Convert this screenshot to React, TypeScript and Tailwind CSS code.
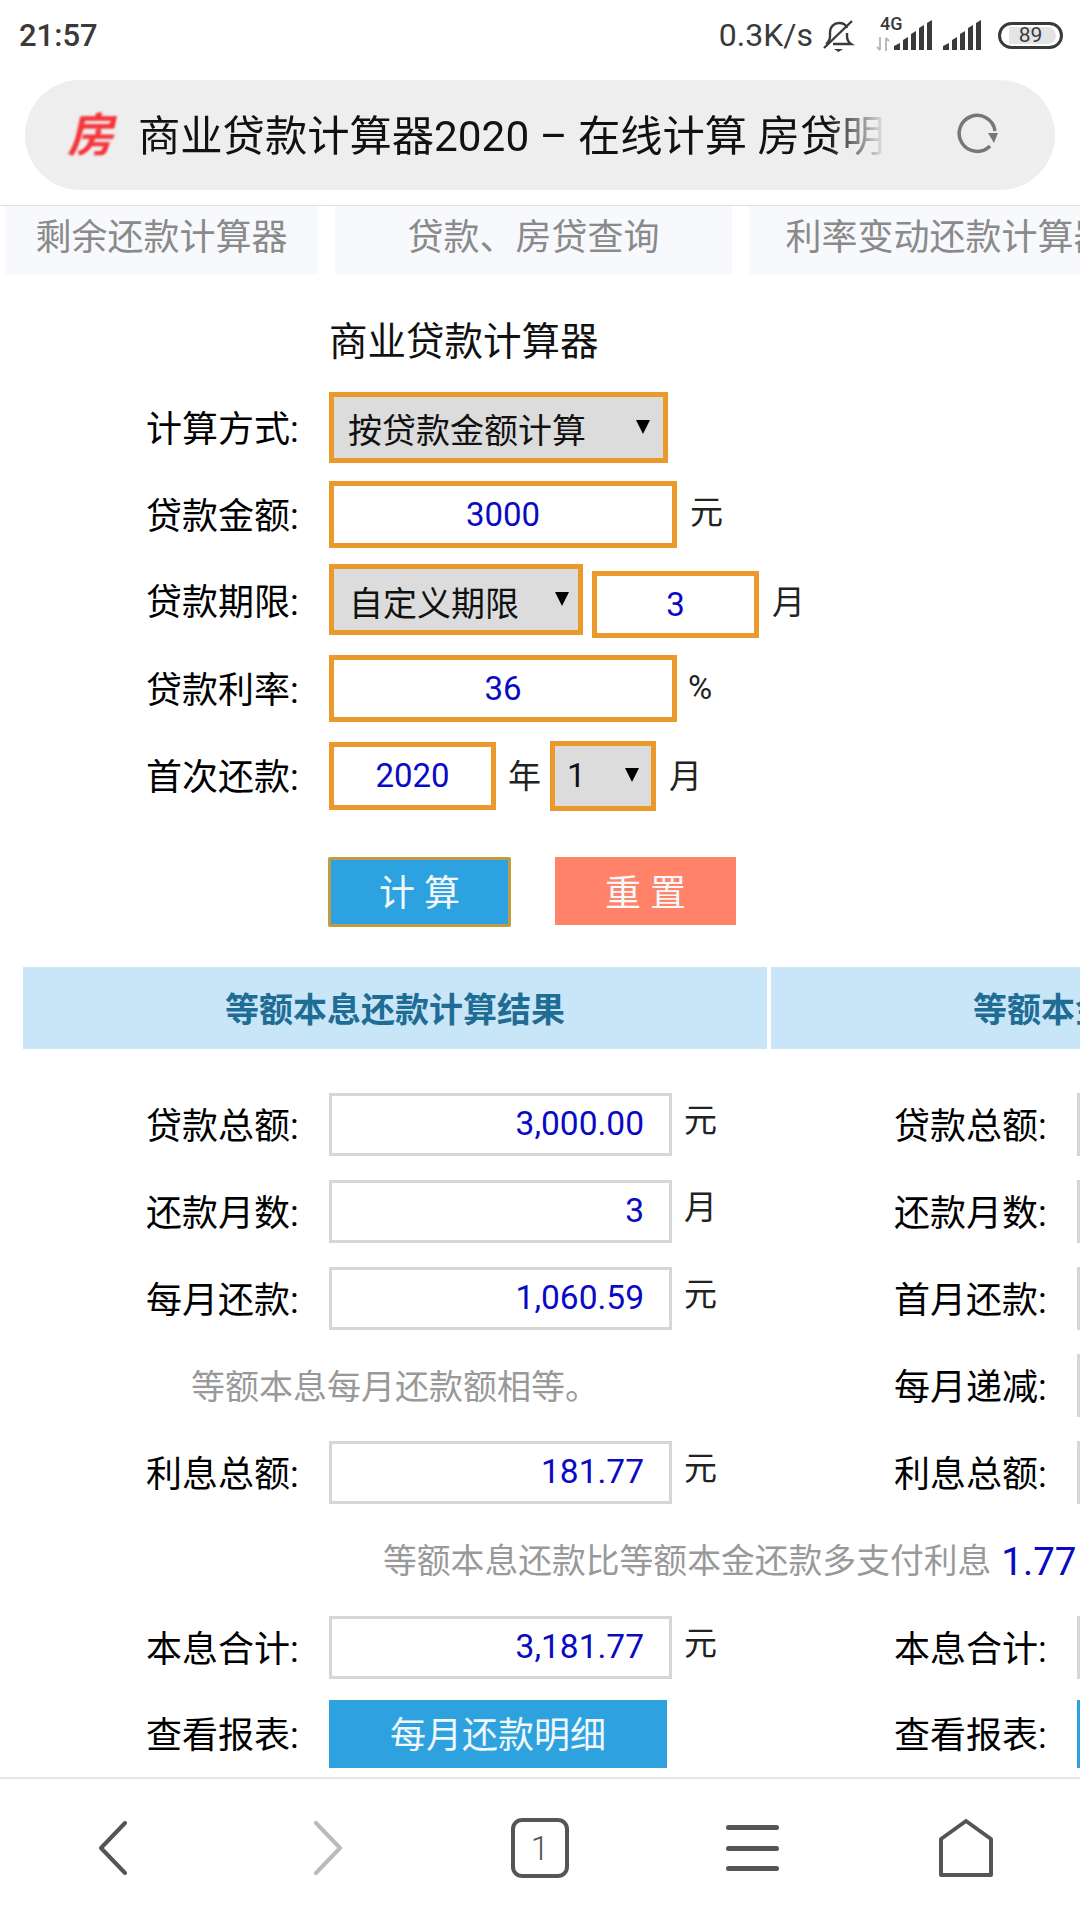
import type { ReactNode } from "react";

const FONT = "font-['Roboto','Noto_Sans_CJK_SC',sans-serif]";

function Arrow({ className }: { className: string }) {
  return (
    <svg width="14" height="14" viewBox="0 0 14 14" className={className}>
      <polygon points="0,0 14,0 7,14" fill="#000" />
    </svg>
  );
}

function Label({ children }: { children: ReactNode }) {
  return (
    <div className="mt-[4px] w-[183px] shrink-0 text-[36px] leading-none text-black">
      {children}
    </div>
  );
}

function Unit({ children, className }: { children: ReactNode; className: string }) {
  return (
    <div className={`shrink-0 text-[33px] leading-none text-[#222] ${className}`}>
      {children}
    </div>
  );
}

function FormInput({ value, className }: { value: string; className: string }) {
  return (
    <div
      className={`flex shrink-0 items-center justify-center border-[5px] border-[#e99a2b] bg-white text-[33px] text-[#0a0ac4] ${className}`}
    >
      {value}
    </div>
  );
}

function ResultInput({ value }: { value?: string }) {
  return (
    <div className="flex h-[63px] w-[343px] shrink-0 items-center justify-end border-[3px] border-[#d6d6d6] bg-white pr-[25px] text-[33.500px] text-[#0a0ac4]">
      {value}
    </div>
  );
}

function ResultRow({ label, value, unit }: { label: string; value?: string; unit?: string }) {
  return (
    <div className="flex w-[748px] shrink-0 items-start pl-[123px]">
      <div className="flex h-[63px] items-center">
        <Label>{label}</Label>
      </div>
      <ResultInput value={value} />
      {unit && <div className="mt-[11px] ml-[12px] text-[33px] leading-none text-[#222]">{unit}</div>}
    </div>
  );
}

function Cell({ children }: { children: ReactNode }) {
  return <div className="flex w-[748px] shrink-0 items-start">{children}</div>;
}

function StatusBar() {
  return (
    <div className="flex h-[60px] items-center pt-[10px] pr-[17px] pl-[19px] text-[#3a3a3a]">
      <div className="text-[31px] leading-none font-medium">21:57</div>
      <div className="ml-auto text-[32px] leading-none">0.3K/s</div>
      <svg width="34" height="34" viewBox="0 0 34 34" className="ml-[8px]" fill="none" stroke="#3a3a3a" strokeWidth="2.4">
        <path d="M5 26 c3-2 4-4 4-8 v-4 c0-5 4-9 9-9 c4 0 7 2 8 5" />
        <path d="M26 15 v3 c0 4 1 6 4 8 H12" />
        <path d="M3 30 L31 3" />
        <path d="M13 31 h9 l-4.500 3z" fill="#3a3a3a" stroke="none" />
      </svg>
      <div className="relative ml-[21px] h-[34px] w-[56px] shrink-0">
        <div className="absolute top-[-3px] left-[4px] text-[18px] leading-none font-medium">4G</div>
        <svg width="14" height="16" viewBox="0 0 14 16" className="absolute top-[18px] left-0" fill="none" stroke="#b5b5b5" strokeWidth="1.800">
          <path d="M4 1 v13 M1 11 l3 3" />
          <path d="M10 15 V2 M13 5 l-3-3" />
        </svg>
        <svg width="40" height="30" viewBox="0 0 40 30" className="absolute top-[2px] left-[18px]" fill="#3a3a3a">
          <path d="M0 30 v-4 l6-3 v7z M9 30 V20 l5-3 V30z M17 30 V14 l5-3 V30z M25 30 V8 l5-3 V30z M33 30 V3 l5-3 V30z" />
        </svg>
      </div>
      <svg width="40" height="30" viewBox="0 0 40 30" className="ml-[11px]" fill="#3a3a3a">
        <path d="M0 30 v-4 l6-3 v7z M9 30 V20 l5-3 V30z M17 30 V14 l5-3 V30z M25 30 V8 l5-3 V30z M33 30 V3 l5-3 V30z" />
      </svg>
      <div className="relative ml-[15px] flex h-[27px] w-[65px] shrink-0 items-center justify-center rounded-full border-[3px] border-[#3a3a3a]">
        <div className="absolute top-[2px] bottom-[2px] left-[8px] w-[47px] rounded-r-full bg-[#e4e4e4]" />
        <span className="relative text-[21px] leading-none">89</span>
      </div>
    </div>
  );
}

function UrlBar() {
  return (
    <div className="mx-[25px] mt-[20px] flex h-[110px] items-center rounded-[55px] bg-[#eeeeee]">
      <div className="ml-[46px] w-[67px] shrink-0 -skew-x-12 text-[46px] leading-none font-bold text-[#f5333a] blur-[1px]">
        房
      </div>
      <div className="w-[749px] shrink-0 overflow-hidden pt-[4px] text-[42.300px] leading-none whitespace-nowrap text-[#111] [mask-image:linear-gradient(to_right,#000_92%,transparent_100%)]">
        商业贷款计算器2020 – 在线计算 房贷明细
      </div>
      <svg width="42" height="42" viewBox="0 0 42 42" className="mt-[-4px] ml-[70px] shrink-0" fill="none">
        <path d="M38 19 A18 18 0 1 0 33 34" stroke="#777" strokeWidth="3.500" />
        <polygon points="31,21 41,21 37,31" fill="#777" />
      </svg>
    </div>
  );
}

function Tabs() {
  return (
    <div className="mt-[15px] flex h-[69px] gap-[17px] overflow-hidden border-t border-[#dfe1e6] pl-[5px] text-[36px] text-[#8a8a8a]">
      <div className="flex w-[313px] shrink-0 items-center justify-center bg-[#f7f9fd] pb-[5px]">剩余还款计算器</div>
      <div className="flex w-[397px] shrink-0 items-center justify-center bg-[#f7f9fd] pb-[5px]">贷款、房贷查询</div>
      <div className="flex w-[397px] shrink-0 items-center justify-center bg-[#f7f9fd] pb-[5px]">利率变动还款计算器</div>
    </div>
  );
}

function CalcForm() {
  return (
    <div className="pl-[146px]">
      <div className="mt-[46px] ml-[183px] text-[38.500px] leading-[44px] text-[#111]">商业贷款计算器</div>

      <div className="mt-[28px] flex h-[71px] items-center">
        <Label>计算方式:</Label>
        <div className="flex h-[71px] w-[339px] shrink-0 items-center border-[5px] border-[#e99a2b] bg-[#dcdcdc] pt-[7px] pl-[14px] text-[34px] text-[#111]">
          按贷款金额计算
          <Arrow className="mb-[9px] ml-[50px]" />
        </div>
      </div>

      <div className="mt-[18px] flex h-[67px] items-center">
        <Label>贷款金额:</Label>
        <FormInput value="3000" className="h-[67px] w-[348px]" />
        <Unit className="mb-[5px] ml-[13px]">元</Unit>
      </div>

      <div className="mt-[16px] flex h-[74px] items-start">
        <div className="flex h-[74px] items-center">
          <Label>贷款期限:</Label>
        </div>
        <div className="flex h-[71px] w-[254px] shrink-0 items-center border-[5px] border-[#e99a2b] bg-[#dcdcdc] pt-[10px] pl-[15px] text-[34px] text-[#111]">
          自定义期限
          <Arrow className="mb-[12px] ml-[36px]" />
        </div>
        <FormInput value="3" className="mt-[7px] ml-[9px] h-[67px] w-[167px]" />
        <Unit className="mt-[22px] ml-[13px]">月</Unit>
      </div>

      <div className="mt-[17px] flex h-[67px] items-center">
        <Label>贷款利率:</Label>
        <FormInput value="36" className="h-[67px] w-[348px]" />
        <Unit className="mb-[3px] ml-[11px]">%</Unit>
      </div>

      <div className="mt-[19px] flex h-[70px] items-center">
        <Label>首次还款:</Label>
        <FormInput value="2020" className="h-[68px] w-[167px]" />
        <Unit className="ml-[12px]">年</Unit>
        <div className="ml-[9px] flex h-[70px] w-[106px] shrink-0 items-center border-[5px] border-[#e99a2b] bg-[#dcdcdc] pl-[12px] text-[33px] text-[#111]">
          1
          <Arrow className="mb-[2px] ml-[39px]" />
        </div>
        <Unit className="ml-[13px]">月</Unit>
      </div>

      <div className="mt-[46px] ml-[182px] flex items-start gap-[44px] text-[36px] leading-none whitespace-pre text-[#f4f8fb]">
        <div className="flex h-[70px] w-[183px] items-center justify-center rounded-[2px] border-[3px] border-[#c09a45] bg-[#2ca3e0] pt-[4px]">计 算</div>
        <div className="flex h-[68px] w-[181px] items-center justify-center bg-[#ff8269] pt-[6px]">重 置</div>
      </div>
    </div>
  );
}

function Results() {
  return (
    <div className="mt-[40px]">
      <div className="ml-[23px] flex gap-[4px]">
        <div className="flex h-[82px] w-[744px] shrink-0 items-center justify-center bg-[#c9e6f8] pt-[4px] text-[34px] font-bold text-[#1f6d94]">等额本息还款计算结果</div>
        <div className="flex h-[82px] w-[744px] shrink-0 items-center justify-center bg-[#c9e6f8] pt-[4px] text-[34px] font-bold text-[#1f6d94]">等额本金还款计算结果</div>
      </div>

      <div className="mt-[44px] ml-[23px] flex h-[87px]">
        <ResultRow label="贷款总额:" value="3,000.00" unit="元" />
        <ResultRow label="贷款总额:" />
      </div>
      <div className="ml-[23px] flex h-[87px]">
        <ResultRow label="还款月数:" value="3" unit="月" />
        <ResultRow label="还款月数:" />
      </div>
      <div className="ml-[23px] flex h-[87px]">
        <ResultRow label="每月还款:" value="1,060.59" unit="元" />
        <ResultRow label="首月还款:" />
      </div>
      <div className="ml-[23px] flex h-[87px]">
        <Cell>
          <div className="flex h-[63px] items-center pt-[3px] pl-[168px] text-[34px] text-[#999]">等额本息每月还款额相等。</div>
        </Cell>
        <ResultRow label="每月递减:" />
      </div>
      <div className="ml-[23px] flex h-[87px]">
        <ResultRow label="利息总额:" value="181.77" unit="元" />
        <ResultRow label="利息总额:" />
      </div>
      <div className="flex h-[88px] items-start pl-[383px] text-[33.800px] whitespace-nowrap text-[#999]">
        <div className="flex h-[68px] items-center">
          等额本息还款比等额本金还款多支付利息
          <span className="ml-[10px] text-[38.500px] text-[#0a0ac4]">1.77</span>
        </div>
      </div>
      <div className="ml-[23px] flex h-[84px]">
        <ResultRow label="本息合计:" value="3,181.77" unit="元" />
        <ResultRow label="本息合计:" />
      </div>
      <div className="ml-[23px] flex h-[68px]">
        <div className="flex w-[748px] shrink-0 items-center pl-[123px]">
          <Label>查看报表:</Label>
          <div className="flex h-[68px] w-[338px] items-center justify-center bg-[#2ea2df] pt-[3px] text-[36px] text-[#f0f8fc]">每月还款明细</div>
        </div>
        <div className="flex w-[748px] shrink-0 items-center pl-[123px]">
          <Label>查看报表:</Label>
          <div className="h-[68px] w-[338px] bg-[#2ea2df]" />
        </div>
      </div>
    </div>
  );
}

function BottomNav() {
  return (
    <div className="flex h-[143px] shrink-0 items-center border-t-2 border-[#e6e6e6] bg-white pb-[3px] pl-[98px]">
      <svg width="30" height="54" viewBox="0 0 30 54" fill="none" stroke="#555" strokeWidth="4" strokeLinecap="round" strokeLinejoin="round">
        <path d="M27 2 L3 27 L27 52" />
      </svg>
      <svg width="30" height="54" viewBox="0 0 30 54" className="ml-[185px]" fill="none" stroke="#bbb" strokeWidth="4" strokeLinecap="round" strokeLinejoin="round">
        <path d="M3 2 L27 27 L3 52" />
      </svg>
      <div className="ml-[168px] flex h-[60px] w-[58px] items-center justify-center rounded-[11px] border-4 border-[#555] text-[33px] leading-none font-light text-[#555]">
        1
      </div>
      <div className="ml-[157px] flex h-[46px] w-[53px] flex-col justify-between">
        <div className="h-[5px] rounded-full bg-[#555]" />
        <div className="h-[5px] rounded-full bg-[#555]" />
        <div className="h-[5px] rounded-full bg-[#555]" />
      </div>
      <svg width="54" height="58" viewBox="0 0 54 58" className="ml-[160px]" fill="none" stroke="#555" strokeWidth="4" strokeLinejoin="round">
        <path d="M27 2 L52 20 V56 H2 V20 Z" />
      </svg>
    </div>
  );
}

export default function App() {
  return (
    <div className={`flex h-[1920px] w-[1080px] flex-col overflow-hidden bg-white ${FONT}`}>
      <StatusBar />
      <UrlBar />
      <Tabs />
      <main className="min-h-0 flex-1 overflow-hidden">
        <CalcForm />
        <Results />
      </main>
      <BottomNav />
    </div>
  );
}
